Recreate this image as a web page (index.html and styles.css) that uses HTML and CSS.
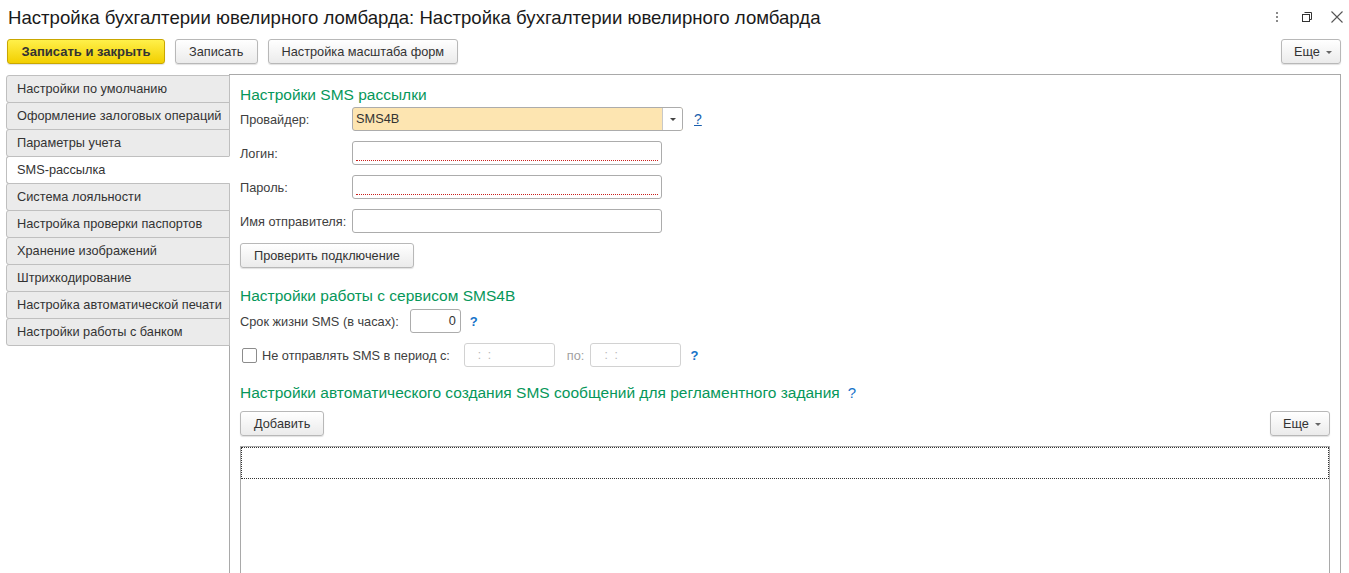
FILE: index.html
```html
<!DOCTYPE html>
<html lang="ru">
<head>
<meta charset="utf-8">
<title>Настройка бухгалтерии ювелирного ломбарда</title>
<link rel="stylesheet" href="styles.css">
</head>
<body>
<div class="titlebar">
  <div class="title">Настройка бухгалтерии ювелирного ломбарда: Настройка бухгалтерии ювелирного ломбарда</div>
  <div class="winctl">
    <svg class="ic" width="14" height="14" viewBox="0 0 14 14"><rect x="6" y="2" width="2" height="2" fill="#8a8a8a"/><rect x="6" y="6" width="2" height="2" fill="#8a8a8a"/><rect x="6" y="10" width="2" height="2" fill="#8a8a8a"/></svg>
    <svg class="ic" width="14" height="14" viewBox="0 0 14 14"><path d="M4.5 2.5h7v7h-2" fill="none" stroke="#333" stroke-width="1"/><rect x="2.5" y="4.5" width="7" height="7" fill="none" stroke="#333" stroke-width="1"/></svg>
    <svg class="ic" width="14" height="14" viewBox="0 0 14 14"><path d="M1.5 1.5l11 11M12.5 1.5l-11 11" stroke="#555" stroke-width="1.1"/></svg>
  </div>
</div>

<div class="toolbar">
  <button class="btn btn-primary">Записать и закрыть</button>
  <button class="btn">Записать</button>
  <button class="btn">Настройка масштаба форм</button>
  <div class="spacer"></div>
  <button class="btn btn-more">Еще <span class="caret"></span></button>
</div>

<div class="main">
  <div class="tabs">
    <div class="tab">Настройки по умолчанию</div>
    <div class="tab">Оформление залоговых операций</div>
    <div class="tab">Параметры учета</div>
    <div class="tab active">SMS-рассылка</div>
    <div class="tab">Система лояльности</div>
    <div class="tab">Настройка проверки паспортов</div>
    <div class="tab">Хранение изображений</div>
    <div class="tab">Штрихкодирование</div>
    <div class="tab">Настройка автоматической печати</div>
    <div class="tab">Настройки работы с банком</div>
  </div>

  <div class="panel">
    <div class="heading h1">Настройки SMS рассылки</div>

    <div class="row r-provider">
      <label class="lbl">Провайдер:</label>
      <div class="field select">
        <span class="val">SMS4B</span>
        <span class="dd"><span class="caret dark"></span></span>
      </div>
      <a class="help link">?</a>
    </div>
    <div class="row">
      <label class="lbl">Логин:</label>
      <div class="field wide req"><span class="req-line"></span></div>
    </div>
    <div class="row">
      <label class="lbl">Пароль:</label>
      <div class="field wide req"><span class="req-line"></span></div>
    </div>
    <div class="row">
      <label class="lbl">Имя отправителя:</label>
      <div class="field wide"></div>
    </div>
    <div class="row r-btn">
      <button class="btn">Проверить подключение</button>
    </div>

    <div class="heading h2">Настройки работы с сервисом SMS4B</div>

    <div class="row r-ttl">
      <label class="lbl-auto ttl-lbl">Срок жизни SMS (в часах):</label>
      <div class="field num">0</div>
      <span class="help">?</span>
    </div>
    <div class="row r-period">
      <span class="checkbox"></span>
      <label class="lbl-auto chk-lbl">Не отправлять SMS в период с:</label>
      <div class="field time">:&nbsp;&nbsp;:</div>
      <span class="lbl-dim">по:</span>
      <div class="field time">:&nbsp;&nbsp;:</div>
      <span class="help">?</span>
    </div>

    <div class="heading h3">Настройки автоматического создания SMS сообщений для регламентного задания<span class="help">?</span></div>

    <div class="row r-tblbar">
      <button class="btn">Добавить</button>
      <div class="spacer"></div>
      <button class="btn btn-more">Еще <span class="caret"></span></button>
    </div>

    <div class="table">
      <div class="trow focus"></div>
    </div>
  </div>
</div>
</body>
</html>
```

FILE: styles.css
```css
* { box-sizing: border-box; }
html, body { margin: 0; padding: 0; height: 100%; overflow: hidden; }
body {
  font-family: "Liberation Sans", Arial, sans-serif;
  font-size: 12.75px;
  color: #333;
  background: #fff;
  width: 1349px;
  height: 573px;
}

.titlebar {
  height: 35px;
  display: flex;
  align-items: center;
  padding: 0 4px 0 8px;
}
.title {
  flex: 1;
  font-size: 18.6px;
  color: #1a1a1a;
  white-space: nowrap;
  padding-top: 1px;
}
.winctl { display: flex; align-items: center; gap: 16px; padding-bottom: 1px; margin-right: 1px; }
.ic { display: block; }

.toolbar {
  display: flex;
  align-items: center;
  padding: 4px 8px 0 7px;
  gap: 10px;
  height: 29px;
}
.spacer { flex: 1; }

.btn {
  font-family: "Liberation Sans", Arial, sans-serif;
  font-size: 12.75px;
  color: #333;
  height: 25px;
  padding: 0 13px;
  border: 1px solid #b8b8b8;
  border-radius: 3px;
  background: linear-gradient(#ffffff, #ebebeb);
  box-shadow: 0 1px 1px rgba(0,0,0,0.12);
  line-height: 23px;
  white-space: nowrap;
  cursor: default;
}
.btn-primary {
  font-weight: bold;
  font-size: 13px;
  padding: 0 10px;
  width: 158px;
  background: linear-gradient(#fff04a, #f2cf00);
  border-color: #c9a700;
  color: #333;
}
.btn-more { padding: 0 8px 0 12px; width: 60px; text-align: left; }
.caret {
  display: inline-block;
  width: 0; height: 0;
  border-left: 3px solid transparent;
  border-right: 3px solid transparent;
  border-top: 3px solid #666;
  vertical-align: middle;
  margin-left: 3px;
  margin-top: -1px;
}
.caret.dark { border-top-color: #444; margin: 0; }

.main {
  display: flex;
  margin-top: 10px;
  padding: 0 8px 0 6px;
  height: 600px;
}

.tabs {
  width: 224px;
  margin-top: 1px;
  margin-right: -1px;
  position: relative;
  z-index: 1;
  flex: none;
}
.tab {
  height: 28px;
  margin-top: -1px;
  border: 1px solid #bfbfbf;
  border-radius: 3px 0 0 3px;
  background: #ebebeb;
  padding-left: 10px;
  line-height: 26px;
  white-space: nowrap;
  overflow: hidden;
  color: #333;
}
.tab:first-child { margin-top: 0; }
.tab.active { background: #fff; border-right-color: #fff; }

.panel {
  flex: 1;
  border: 1px solid #a9a9a9;
  border-bottom: none;
  padding: 10px 10px 0 10px;
}

.heading {
  font-size: 15.5px;
  color: #06975a;
  line-height: 18px;
  height: 18px;
  white-space: nowrap;
}
.h1 { margin-top: 1px; }
.h2 { margin-top: 19px; }
.h3 { margin-top: 17px; }
.h3 .help { margin-left: 8px; font-weight: normal; font-size: 15px; }

.row {
  display: flex;
  align-items: center;
  height: 24px;
  margin-top: 10px;
}
.r-provider { margin-top: 3px; }
.r-btn { height: 25px; }
.r-ttl { margin-top: 4px; }
.r-tblbar { height: 25px; margin-top: 9px; }

.lbl { width: 112px; flex: none; color: #404040; white-space: nowrap; }
.lbl-auto { color: #404040; white-space: nowrap; margin-right: 5px; }
.ttl-lbl { margin-right: 11px; }

.field {
  height: 24px;
  border: 1px solid #acacac;
  border-radius: 3px;
  background: #fff;
}
.wide { width: 310px; }
.req { display: flex; flex-direction: column; justify-content: flex-end; padding: 0 3px 3px; }
.req-line { display: block; border-bottom: 1px dotted #c8201c; }

.select {
  width: 331px;
  display: flex;
  background: #fde5b1;
  overflow: hidden;
}
.select .val { flex: 1; padding-left: 3px; line-height: 21px; color: #333; }
.select .dd {
  width: 20px;
  background: #fff;
  border-left: 1px solid #c8c8c8;
  display: flex;
  align-items: center;
  justify-content: center;
}

.help {
  color: #1673c9;
  font-weight: bold;
  font-size: 13px;
  margin-left: 9px;
}
.help.link { text-decoration: underline; color: #1a5fae; margin-left: 11px; font-size: 14px; font-weight: normal; }

.num {
  width: 51px;
  text-align: right;
  padding-right: 4px;
  line-height: 22px;
  color: #333;
}

.r-period .checkbox {
  width: 15px; height: 15px;
  border: 1px solid #8c8c8c;
  border-radius: 2px;
  background: #fff;
  margin-left: 2px;
  margin-right: 5px;
  flex: none;
}
.chk-lbl { margin-right: 14px; }
.time {
  width: 91px;
  border-color: #d2d2d2;
  color: #b8b8b8;
  padding-left: 13px;
  line-height: 22px;
  font-size: 12px;
}
.lbl-dim { color: #a0a0a0; margin: 0 6px 0 12px; }

.table {
  margin-top: 10px;
  height: 200px;
  border: 1px solid #a9a9a9;
  border-bottom: none;
}
.trow { height: 32px; }
.trow.focus { border: 1px dotted #333; }
```
